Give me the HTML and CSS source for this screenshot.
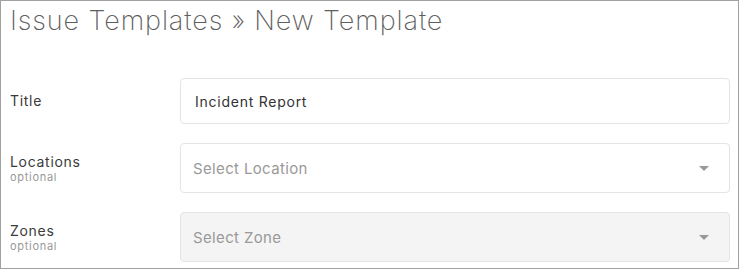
FILE: index.html
```html
<!DOCTYPE html>
<html>
<head>
<meta charset="utf-8">
<link rel="stylesheet" href="styles.css">
</head>
<body>
<div class="frame">
  <h1 class="page-title">Issue Templates » New Template</h1>
  <div class="form">
    <div class="row">
      <div class="label"><span class="label-main">Title</span></div>
      <div class="field field-text">Incident Report</div>
    </div>
    <div class="row">
      <div class="label label-stack"><span class="label-main">Locations</span><span class="label-sub">optional</span></div>
      <div class="field field-select"><span class="placeholder">Select Location</span><span class="caret"></span></div>
    </div>
    <div class="row">
      <div class="label label-stack"><span class="label-main">Zones</span><span class="label-sub">optional</span></div>
      <div class="field field-select is-disabled"><span class="placeholder">Select Zone</span><span class="caret"></span></div>
    </div>
  </div>
</div>
</body>
</html>
```
FILE: styles.css
```css
* { box-sizing: border-box; }
html, body { margin: 0; padding: 0; background: #fff; }
body { font-family: Inter, "Open Sans", sans-serif; color: #333; }

.frame {
  width: 739px;
  height: 269px;
  border: 1px solid #a0a0a0;
  padding: 0 8px 0 9px;
  overflow: hidden;
}

.page-title {
  margin: 0;
  padding-top: 2px;
  font-size: 27px;
  line-height: 36px;
  font-weight: 200;
  color: #5e5e5e;
  letter-spacing: 0.9px;
}

.form {
  margin-top: 39px;
  display: flex;
  flex-direction: column;
  gap: 19px;
}

.row {
  display: flex;
  align-items: center;
}

.label {
  width: 170px;
  display: flex;
  flex-direction: column;
}

.label-stack {
  padding-top: 2px;
}

.label-main {
  font-size: 14px;
  line-height: 16px;
  color: #3a3a3a;
  letter-spacing: 0.7px;
}

.label-sub {
  font-size: 11px;
  line-height: 14px;
  color: #999;
  letter-spacing: 0.7px;
}

.field {
  flex: 1;
  border: 1px solid #e4e4e4;
  border-radius: 4px;
  display: flex;
  align-items: center;
  background: #fff;
}

.field-text {
  height: 46px;
  padding-left: 14px;
  font-size: 14px;
  color: #333;
  letter-spacing: 0.75px;
}

.field-select {
  height: 50px;
  padding-left: 12px;
  padding-right: 20px;
  justify-content: space-between;
}

.field-select.is-disabled {
  background: #f4f4f4;
}

.placeholder {
  font-size: 15px;
  color: #999;
  letter-spacing: 0.35px;
}

.caret {
  width: 0;
  height: 0;
  border-left: 5px solid transparent;
  border-right: 5px solid transparent;
  border-top: 5px solid #999;
}
```
